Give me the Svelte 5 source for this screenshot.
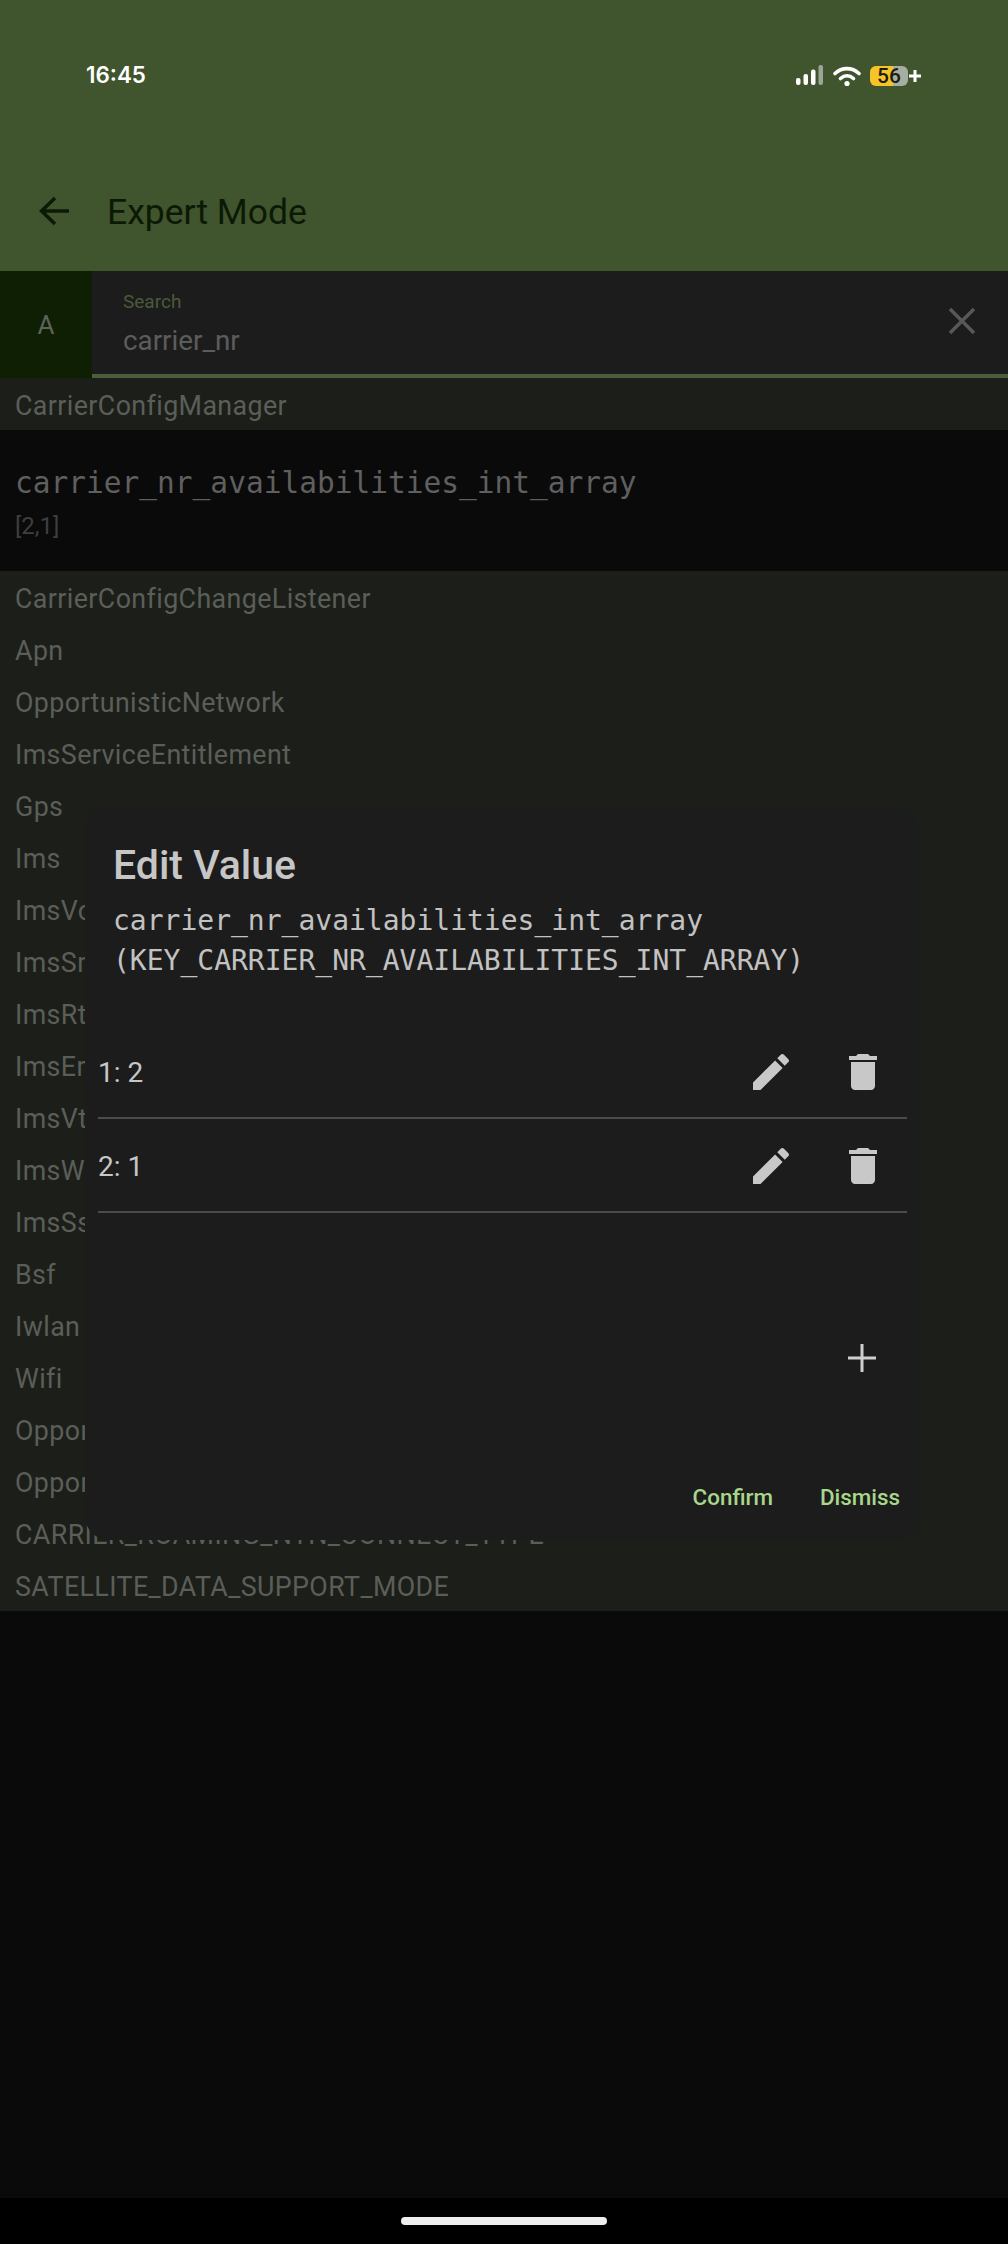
<script lang="ts">
	const categories = [
		'CarrierConfigChangeListener',
		'Apn',
		'OpportunisticNetwork',
		'ImsServiceEntitlement',
		'Gps',
		'Ims',
		'ImsVoice',
		'ImsSms',
		'ImsRtp',
		'ImsEmergency',
		'ImsVt',
		'ImsWfc',
		'ImsSs',
		'Bsf',
		'Iwlan',
		'Wifi',
		'Opportunistic',
		'Opportunistic',
		'CARRIER_ROAMING_NTN_CONNECT_TYPE',
		'SATELLITE_DATA_SUPPORT_MODE'
	];

	const values = [
		{ index: 1, value: 2 },
		{ index: 2, value: 1 }
	];
</script>

<div class="page">
	<header class="appbar">
		<div class="status">
			<span class="time">16:45</span>
			<div class="status-icons">
				<svg width="30" height="22" viewBox="0 0 30 22" aria-hidden="true">
					<rect x="1" y="13" width="4.5" height="7" rx="2" fill="#fff" />
					<rect x="8.5" y="9" width="4.5" height="11" rx="2" fill="#fff" />
					<rect x="16" y="4.5" width="4.5" height="15.5" rx="2" fill="#fff" />
					<rect x="23.5" y="0" width="4.5" height="20" rx="2" fill="#9aa695" />
				</svg>
				<svg class="wifi" width="28" height="22" viewBox="0 0 28 22" aria-hidden="true">
					<path d="M2 8.5c7-6.5 17-6.5 24 0" fill="none" stroke="#fff" stroke-width="3.6" stroke-linecap="round" />
					<path d="M7.5 13.5c4-3.6 9-3.6 13 0" fill="none" stroke="#fff" stroke-width="3.6" stroke-linecap="round" />
					<circle cx="14" cy="18.5" r="2.6" fill="#fff" />
				</svg>
				<div class="battery">
					<span class="battery-level">56</span>
					<svg class="charge" width="14" height="14" viewBox="0 0 14 14" aria-hidden="true">
						<path d="M7 1v12M1 7h12" stroke="#fff" stroke-width="3" />
					</svg>
				</div>
			</div>
		</div>
		<div class="toolbar">
			<svg class="back" width="32" height="32" viewBox="0 0 32 32" aria-hidden="true">
				<path d="M30 15H3M16 2L2.500 15 16 28" fill="none" stroke="#0c1a05" stroke-width="3.500" />
			</svg>
			<h1>Expert Mode</h1>
		</div>
	</header>

	<div class="search">
		<div class="search-mode">A</div>
		<div class="search-field">
			<div class="search-text">
				<span class="search-label">Search</span>
				<span class="search-value">carrier_nr</span>
			</div>
			<svg class="clear" width="30" height="30" viewBox="0 0 30 30" aria-hidden="true">
				<path d="M3 3l24 24M27 3L3 27" stroke="#585858" stroke-width="3.500" />
			</svg>
		</div>
	</div>

	<div class="category">CarrierConfigManager</div>
	<div class="config-item">
		<div class="config-key">carrier_nr_availabilities_int_array</div>
		<div class="config-value">[2,1]</div>
	</div>
	{#each categories as name}
		<div class="category">{name}</div>
	{/each}

	<div class="rest"></div>
	<div class="navbar"><span class="home"></span></div>

	<div class="dialog" role="dialog" aria-label="Edit Value">
		<h2>Edit Value</h2>
		<p class="dialog-key">carrier_nr_availabilities_int_array<br />(KEY_CARRIER_NR_AVAILABILITIES_INT_ARRAY)</p>
		<ul class="values">
			{#each values as row}
				<li>
					<span class="row-label">{row.index}: {row.value}</span>
					<svg width="48" height="48" viewBox="0 0 24 24" aria-hidden="true">
						<path d="M3 17.250V21h3.750L17.810 9.940l-3.750-3.750L3 17.250zM20.710 7.040c.39-.39.39-1.020 0-1.410l-2.340-2.340c-.39-.39-1.020-.39-1.410 0l-1.830 1.830 3.750 3.750 1.830-1.830z" />
					</svg>
					<svg width="48" height="48" viewBox="0 0 24 24" aria-hidden="true">
						<path d="M6 19c0 1.100.9 2 2 2h8c1.100 0 2-.9 2-2V7H6v12zM19 4h-3.500l-1-1h-5l-1 1H5v2h14V4z" />
					</svg>
				</li>
			{/each}
		</ul>
		<div class="add-row">
			<svg width="28" height="28" viewBox="0 0 28 28" aria-hidden="true">
				<path d="M14 0v28M0 14h28" stroke="#cfcfcf" stroke-width="3" />
			</svg>
		</div>
		<div class="actions">
			<span>Confirm</span>
			<span>Dismiss</span>
		</div>
	</div>
</div>

<style>
	:global(body) {
		margin: 0;
		background: #0a0a0a;
	}

	.page {
		position: relative;
		display: flex;
		flex-direction: column;
		width: 1008px;
		height: 2244px;
		overflow: hidden;
		background: #0a0a0a;
		font-family: Roboto, 'Liberation Sans', sans-serif;
	}

	.appbar {
		display: flex;
		flex-direction: column;
		height: 271px;
		flex: none;
		background: #40542e;
	}

	.status {
		display: flex;
		align-items: center;
		justify-content: space-between;
		height: 44px;
		margin-top: 52px;
		padding: 0 86px;
	}

	.time {
		color: #fff;
		font-family: Inter, Roboto, sans-serif;
		font-size: 22.400px;
		font-weight: 600;
	}

	.status-icons {
		display: flex;
		align-items: center;
		gap: 7px;
		margin-right: 2px;
		margin-top: 3px;
	}

	.wifi {
		margin-left: 1px;
	}

	.battery {
		position: relative;
		width: 50px;
		height: 20px;
		margin-left: 2px;
	}

	.battery-level {
		display: block;
		width: 38px;
		height: 20px;
		border-radius: 6px;
		background: linear-gradient(90deg, #f6c426 0 60%, #a6aea2 60%);
		color: #1b1b10;
		font-size: 21px;
		font-weight: 500;
		line-height: 20px;
		text-align: center;
	}

	.charge {
		position: absolute;
		top: 3px;
		right: -2px;
	}

	.toolbar {
		display: flex;
		align-items: center;
		gap: 36px;
		height: 56px;
		margin-top: 88px;
		padding-left: 39px;
	}

	h1 {
		margin: 0;
		color: #0c1a05;
		font-size: 35.500px;
		font-weight: 400;
	}

	.search {
		display: flex;
		height: 107px;
		flex: none;
	}

	.search-mode {
		display: flex;
		align-items: center;
		justify-content: center;
		width: 92px;
		background: #0f1f04;
		color: #5e6459;
		font-size: 26px;
	}

	.search-field {
		display: flex;
		flex: 1;
		align-items: center;
		justify-content: space-between;
		padding: 0 31px 3px 31px;
		border-bottom: 4px solid #4c5d3c;
		background: #1c1c1c;
	}

	.search-text {
		display: flex;
		flex-direction: column;
		gap: 11px;
		margin-top: 4px;
	}

	.search-label {
		color: #4a5a3a;
		font-size: 19px;
	}

	.search-value {
		color: #5c5c5c;
		font-size: 27.800px;
	}

	.category {
		display: flex;
		align-items: center;
		height: 52px;
		flex: none;
		box-sizing: border-box;
		padding: 3px 0 0 15px;
		background: #1c1f19;
		color: #5b5e58;
		font-size: 26.800px;
		letter-spacing: 0.4px;
	}

	.category:first-of-type {
		height: 53px;
	}

	.config-item {
		display: flex;
		flex-direction: column;
		justify-content: center;
		height: 141px;
		flex: none;
		padding-left: 15px;
		background: #0a0a0a;
	}

	.config-key {
		color: #5f5f5f;
		font-family: 'DejaVu Sans Mono', monospace;
		font-size: 29.500px;
		line-height: 42px;
	}

	.config-value {
		margin-top: 8px;
		color: #3e3e3e;
		font-size: 24px;
	}

	.rest {
		flex: 1;
		background: #0a0a0a;
	}

	.navbar {
		display: flex;
		justify-content: center;
		height: 46px;
		flex: none;
		background: #000;
	}

	.home {
		width: 206px;
		height: 8px;
		margin-top: 19px;
		border-radius: 4px;
		background: #efefef;
	}

	.dialog {
		position: absolute;
		top: 807px;
		left: 85px;
		display: flex;
		flex-direction: column;
		width: 835px;
		height: 733px;
		padding: 0 13px;
		box-sizing: border-box;
		border-radius: 24px;
		background: #1c1c1c;
		color: #c6c6c6;
	}

	h2 {
		margin: 34px 0 0 15px;
		font-size: 41px;
		font-weight: 500;
		line-height: 48px;
	}

	.dialog-key {
		margin: 12px 0 0 15px;
		color: #c2c2c2;
		font-family: 'DejaVu Sans Mono', monospace;
		font-size: 28px;
		line-height: 40px;
	}

	.values {
		margin: 44px 0 0;
		padding: 0;
		list-style: none;
	}

	.values li {
		display: flex;
		align-items: center;
		gap: 44px;
		height: 90px;
		padding: 2px 20px 0 0;
		border-bottom: 2px solid #4a4a4f;
	}

	.row-label {
		flex: 1;
		font-size: 28px;
	}

	.values svg {
		fill: #c8c8c8;
	}

	.add-row {
		display: flex;
		justify-content: flex-end;
		margin-top: 131px;
		padding-right: 31px;
	}

	.actions {
		display: flex;
		justify-content: flex-end;
		gap: 47px;
		margin-top: 112px;
		padding-right: 7px;
		color: #a8d68a;
		font-size: 22.400px;
		font-weight: 500;
	}
</style>
